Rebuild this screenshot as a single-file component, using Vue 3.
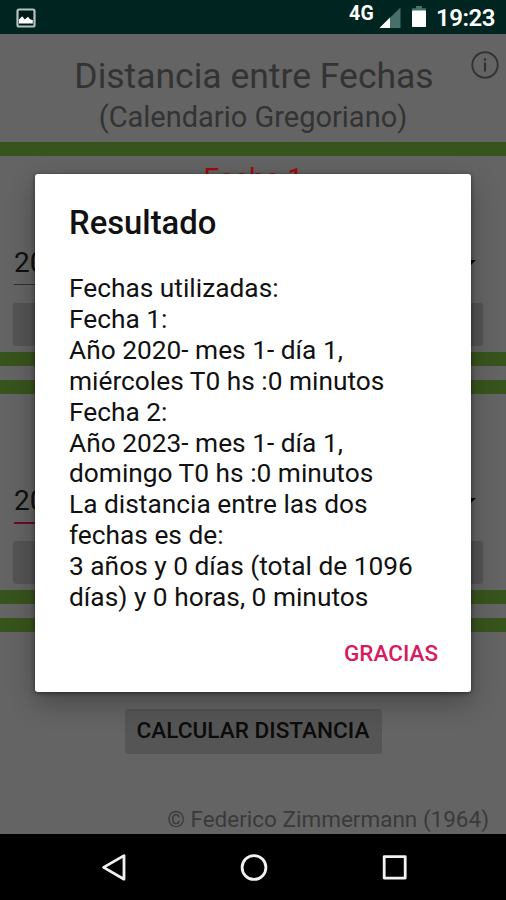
<script setup>
const sections = [
  { id: 1, title: 'Fecha 1', year: '2020', focused: false },
  { id: 2, title: 'Fecha 2', year: '2023', focused: true },
]
const lines = [
  'Fechas utilizadas:',
  'Fecha 1:',
  'Año 2020- mes 1- día 1,',
  'miércoles T0 hs :0 minutos',
  'Fecha 2:',
  'Año 2023- mes 1- día 1,',
  'domingo T0 hs :0 minutos',
  'La distancia entre las dos',
  'fechas es de:',
  '3 años y 0 días (total de 1096',
  'días) y 0 horas, 0 minutos',
]
</script>

<template>
  <div class="screen">
    <div class="status">
      <svg class="photo" width="20" height="20" viewBox="0 0 20 20">
        <rect x="1.5" y="1.5" width="17" height="17" rx="1.6" fill="#001a17" stroke="#b4c3c1" stroke-width="2.2" />
        <path d="M3 15.4V11.500l3.200-3.300 2.600 3.200 3.200-2.600 2 2.400 2.800.8v3.400z" fill="#fff" />
      </svg>
      <div class="status-right">
        <span class="net">4G</span>
        <svg class="signal" width="22" height="22" viewBox="0 0 22 22">
          <path d="M21.5 .5V21H.5z" fill="#47706b" />
          <path d="M11 10.500V21H.5z" fill="#fff" />
        </svg>
        <svg class="battery" width="16" height="22" viewBox="0 0 16 22">
          <path d="M5 0h6v2.200h4v3H1v-3h4z" fill="#47706b" />
          <rect x="1" y="4.400" width="14" height="16.600" rx=".8" fill="#fff" />
        </svg>
        <span class="clock">19:23</span>
      </div>
    </div>

    <main class="page">
      <header class="head">
        <h1>Distancia entre Fechas</h1>
        <h2>(Calendario Gregoriano)</h2>
        <svg class="info" width="28" height="28" viewBox="0 0 28 28">
          <circle cx="14" cy="14" r="12.700" fill="none" stroke="#333" stroke-width="1.900" />
          <path d="M14 11.600V20.600M14 7.200v2.500" stroke="#333" stroke-width="2.200" />
        </svg>
      </header>
      <div class="bar"></div>
      <template v-for="s in sections" :key="s.id">
        <section class="date" :class="{ focused: s.focused }">
          <h3>{{ s.title }}</h3>
          <div class="fields">
            <span class="year">{{ s.year }}</span>
            <svg class="arrow" width="14" height="7" viewBox="0 0 14 7"><path d="M0 0h14L7 7z" fill="#0c0c0c" /></svg>
          </div>
          <div class="wide"></div>
        </section>
        <div class="bar"></div>
        <div class="gap"></div>
        <div class="bar"></div>
      </template>
      <button class="calc">CALCULAR DISTANCIA</button>
      <footer>© Federico Zimmermann (1964)</footer>
    </main>

    <nav class="nav">
      <svg width="506" height="66" viewBox="0 0 506 66" fill="none" stroke="#f2f2f2" stroke-width="2.800" stroke-linejoin="round">
        <path d="M124 21.600V45.200L103.600 33.400z" />
        <circle cx="254" cy="33.500" r="11.900" />
        <rect x="384.200" y="22.600" width="21" height="21.500" />
      </svg>
    </nav>

    <div class="dialog">
      <h4>Resultado</h4>
      <div class="body">
        <div v-for="(l, i) in lines" :key="i">{{ l }}</div>
      </div>
      <button class="ok">GRACIAS</button>
    </div>
  </div>
</template>

<style>
body { background: #646464; }
</style>

<style scoped>
.screen {
  position: relative;
  width: 506px;
  height: 900px;
  overflow: hidden;
  display: flex;
  flex-direction: column;
  background: #646464;
  font-family: Roboto, "Liberation Sans", sans-serif;
  box-sizing: border-box;
}
h1, h2, h3, h4 { margin: 0; font-weight: 400; white-space: nowrap; }
button { border: 0; padding: 0; font-family: inherit; font-weight: 500; white-space: nowrap; }
.status {
  height: 34px;
  flex: none;
  background: #002420;
  display: flex;
  justify-content: space-between;
  color: #fff;
}
.photo { margin: 8px 0 0 16px; }
.status-right { display: flex; padding-right: 11px; }
.net { font-size: 19.5px; font-weight: 700; line-height: 27px; letter-spacing: .3px; margin-right: 5px; }
.signal { margin: 7px 10px 0 0; }
.battery { margin: 6px 9px 0 0; }
.clock { font-size: 24px; font-weight: 600; line-height: 37px; letter-spacing: -.5px; }
.page { height: 800px; flex: none; display: flex; flex-direction: column; }
.head {
  position: relative;
  height: 108px;
  flex: none;
  text-align: center;
  color: #333;
}
.head h1 { font-size: 35.5px; line-height: 42px; padding-top: 21px; padding-left: 2px; }
.head h2 { font-size: 29px; line-height: 34px; padding-top: 3px; }
.info { position: absolute; right: 7px; top: 17px; }
.bar { height: 14px; flex: none; background: #38541d; }
.gap { height: 14px; flex: none; }
.date { height: 196px; flex: none; padding: 0 23px 0 13px; box-sizing: border-box; }
.date h3 { color: #a00c0c; font-size: 28.5px; line-height: 34px; padding: 6px 0 0 11px; text-align: center; }
.fields { display: flex; align-items: center; justify-content: space-between; padding: 46px 7px 0 1px; height: 43px; font-size: 28px; color: #101010; }
.year { width: 100px; height: 42px; line-height: 40px; border-bottom: 1px solid #303030; box-sizing: border-box; }
.focused .year { height: 44px; line-height: 41px; border-bottom: 2px solid #6b0a2c; }
.wide { margin-top: 18px; height: 43px; border-radius: 3px; background: #545454; }
.calc {
  align-self: center;
  margin-top: 77px;
  padding-bottom: 2px;
  width: 257px;
  height: 45px;
  flex: none;
  border-radius: 3px;
  background: #555;
  color: #0c0c0c;
  font-size: 22.6px;
}
footer { margin-top: 51px; padding-right: 17px; text-align: right; font-size: 22.5px; line-height: 28px; color: #3a3a3a; }
.nav { height: 66px; flex: none; background: #000; }
.dialog {
  position: absolute;
  left: 35px;
  top: 174px;
  width: 436px;
  height: 518px;
  box-sizing: border-box;
  padding: 31px 33px 0 34px;
  display: flex;
  flex-direction: column;
  background: #fff;
  border-radius: 3px;
  box-shadow: 0 10px 28px rgba(0, 0, 0, .3), 0 1px 4px rgba(0, 0, 0, .5);
  color: #111;
}
.dialog h4 { font-size: 32.8px; font-weight: 500; line-height: 36px; }
.body { margin-top: 32px; font-size: 26.300px; line-height: 30.9px; white-space: nowrap; }
.ok { align-self: flex-end; margin-top: 25px; line-height: 30px; font-size: 22.5px; color: #d81b60; background: none; }
</style>
